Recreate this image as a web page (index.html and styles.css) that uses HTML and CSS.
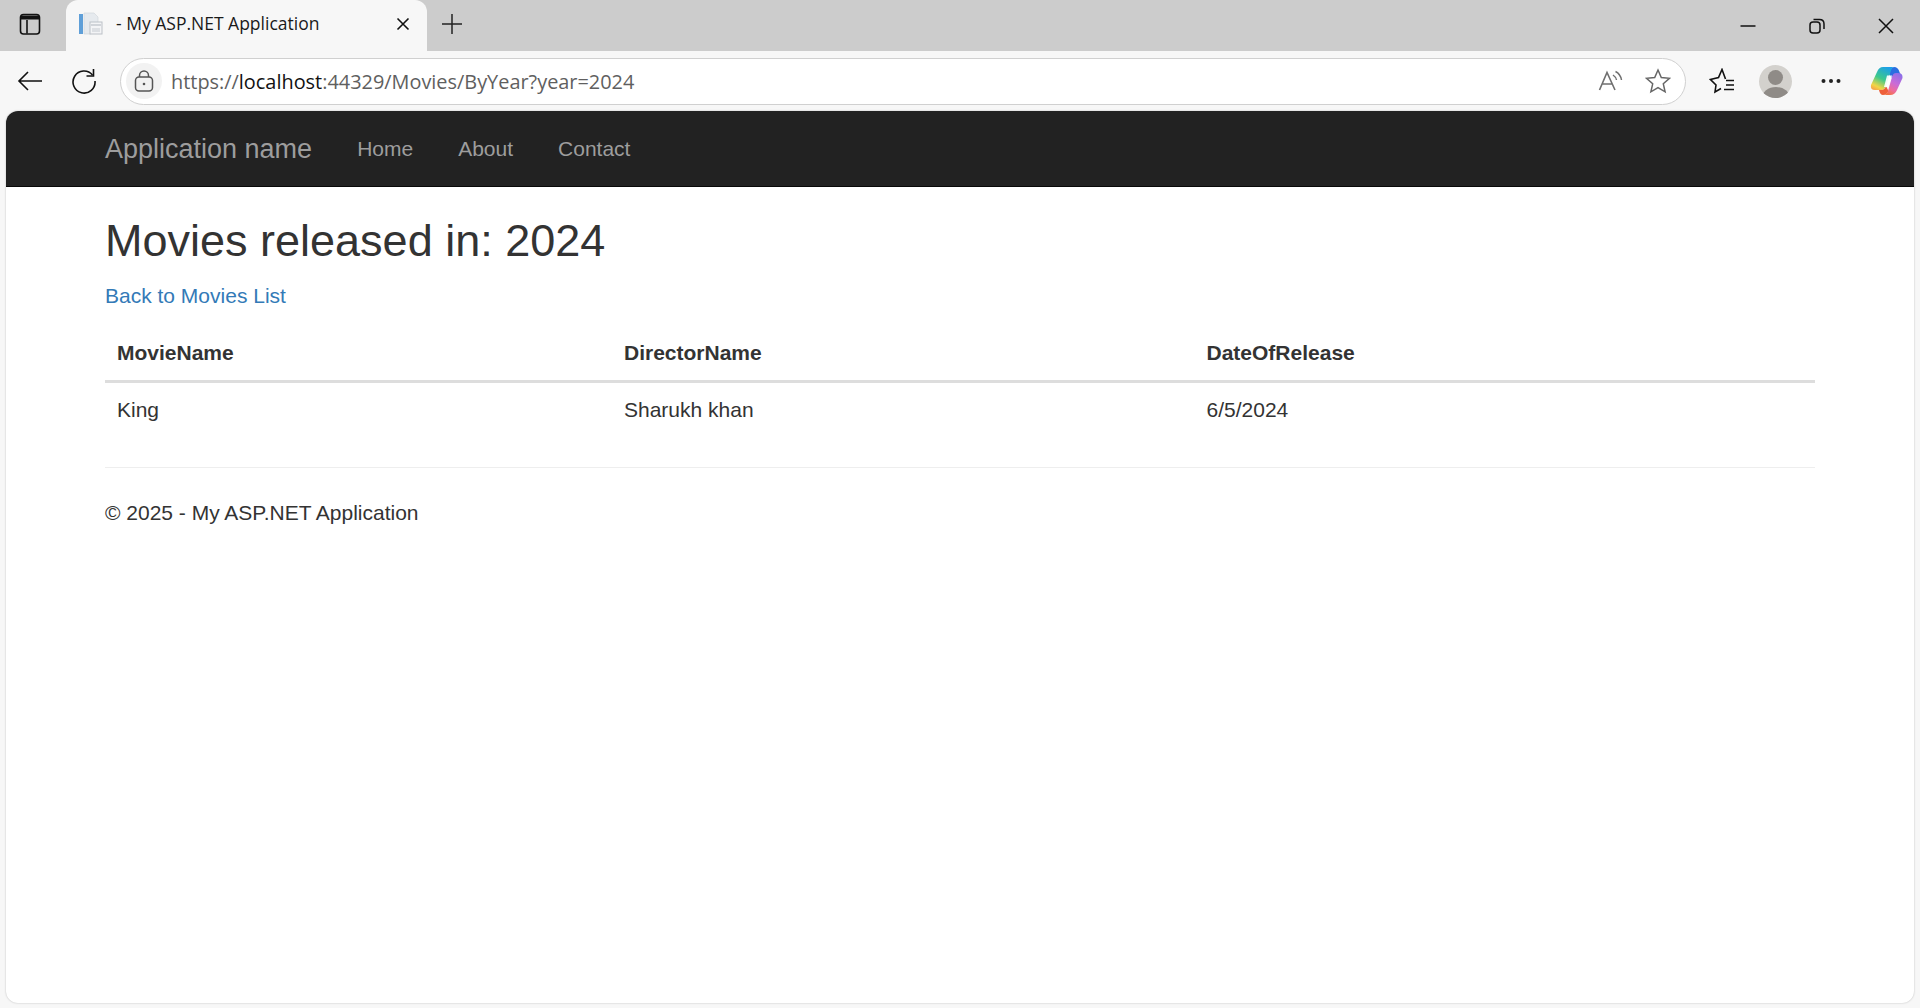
FILE: index.html
```html
<!DOCTYPE html>
<html lang="en">
<head>
    <meta charset="UTF-8">
    <meta name="viewport" content="width=device-width, initial-scale=1.0">
    <title>- My ASP.NET Application</title>
    <link rel="stylesheet" href="styles.css">
</head>
<body>
    <div class="browser">
        <div class="tabstrip">
            <div class="tab-actions">
                <svg class="icon" width="24" height="24" viewBox="0 0 24 24" fill="none" stroke="#111" stroke-width="1.6"><rect x="2.500" y="2.500" width="19" height="19.500" rx="3"/><path d="M9 8V21.500"/><path d="M3 5.500H21" stroke-width="4"/></svg>
            </div>
            <div class="tab">
                <svg class="favicon" width="26" height="26" viewBox="0 0 26 26"><rect x="2" y="3" width="4" height="20" fill="#5f9fd8"/><path d="M7 2H17L21 6V12H14V23H7Z" fill="#e6eaee" stroke="#cfd3d8" stroke-width=".6"/><rect x="13" y="11" width="12" height="12" fill="#f3f4f6" stroke="#bcc1c7"/><rect x="14" y="13" width="10" height="2" fill="#d0d4d9"/><rect x="15" y="17" width="8" height="4" fill="#dcdfe3"/></svg>
                <span class="tab-title">- My ASP.NET Application</span>
                <svg class="tab-close" width="14" height="14" viewBox="0 0 14 14" stroke="#111" stroke-width="1.6"><path d="M1.500 1.500L12.500 12.500M12.500 1.500L1.500 12.500"/></svg>
            </div>
            <svg class="new-tab" width="20" height="20" viewBox="0 0 20 20" stroke="#222" stroke-width="1.5"><path d="M10 0V20M0 10H20"/></svg>
            <div class="window-controls">
                <svg width="16" height="16" viewBox="0 0 16 16" stroke="#111" stroke-width="1.5"><path d="M0.500 8H15.500"/></svg>
                <svg width="16" height="16" viewBox="0 0 16 16" fill="none" stroke="#111" stroke-width="1.5"><rect x="1" y="4" width="10" height="11" rx="3"/><path d="M4.500 1.500H10.500Q15 1.500 15 6V11"/></svg>
                <svg width="16" height="16" viewBox="0 0 16 16" stroke="#111" stroke-width="1.5"><path d="M1 1L15 15M15 1L1 15"/></svg>
            </div>
        </div>
        <div class="toolbar">
            <svg class="tool-btn back" width="26" height="22" viewBox="0 0 26 22" fill="none" stroke="#111" stroke-width="1.6"><path d="M25 11H2M11 2L2 11L11 20"/></svg>
            <svg class="tool-btn reload" width="26" height="26" viewBox="0 0 26 26" fill="none" stroke="#111" stroke-width="1.6"><path d="M21.500 7A11 11 0 1 0 24 13"/><path d="M22.500 1V8H15.500"/></svg>
            <div class="address-bar">
                <span class="lock-pill">
                    <svg width="20" height="22" viewBox="0 0 20 22" fill="none" stroke="#555" stroke-width="1.500"><rect x="1.500" y="7" width="17" height="14" rx="3.500"/><path d="M5.500 7V5.500A4.500 4.500 0 0 1 14.500 5.500V7"/><circle cx="10" cy="14" r="1.300" fill="#555" stroke="none"/></svg>
                </span>
                <span class="url"><span class="url-dim">https://</span><span class="url-host">localhost</span><span class="url-dim">:44329/Movies/ByYear?year=2024</span></span>
                <svg class="read-aloud" width="26" height="24" viewBox="0 0 26 24" fill="none" stroke="#6f6f6f" stroke-width="1.600"><path d="M1.500 21L9 3.500L17 21M4.500 15H14"/><path d="M15 6Q18 8 18.500 11M17.500 2.500Q22.500 5 23.500 11" stroke-width="1.500"/></svg>
                <svg class="fav-star" width="26" height="26" viewBox="0 0 26 26" fill="none" stroke="#666" stroke-width="1.500"><path d="M13 2L16.300 9.500L24.500 10.300L18.300 15.800L20.100 23.800L13 19.600L5.900 23.800L7.700 15.800L1.500 10.300L9.700 9.500Z"/></svg>
            </div>
            <div class="tool-group">
                <svg width="26" height="26" viewBox="0 0 26 26" fill="none" stroke="#111" stroke-width="1.600"><path d="M16.500 11L13 1.500L9.500 9.500L1.500 11.500L7 17L6 24L12 20.500"/><path d="M17 12.500H25M17 17H25M15 21.500H25"/></svg>
                <div class="avatar"><span class="avatar-head"></span><span class="avatar-body"></span></div>
                <svg class="more" width="20" height="6" viewBox="0 0 20 6" fill="#222"><circle cx="2.500" cy="3" r="2"/><circle cx="10" cy="3" r="2"/><circle cx="17.500" cy="3" r="2"/></svg>
                <svg class="copilot" width="33" height="30" viewBox="0 0 33 30" fill="none">
                    <defs>
                        <linearGradient id="cp-left" x1="0.700" y1="0" x2="0.200" y2="1"><stop offset="0" stop-color="#1c9fe8"/><stop offset=".5" stop-color="#3cc98c"/><stop offset=".85" stop-color="#f2d545"/><stop offset="1" stop-color="#f6a84a"/></linearGradient>
                        <linearGradient id="cp-right" x1="0.800" y1="0" x2="0.300" y2="1"><stop offset="0" stop-color="#8a6fe8"/><stop offset=".45" stop-color="#c96bd8"/><stop offset=".75" stop-color="#ee6c9c"/><stop offset="1" stop-color="#f3703f"/></linearGradient>
                    </defs>
                    <path d="M24 1Q28 1 29.500 6L31 10H24Q22 10 21 12L19 8Q21 1 24 1Z" fill="#2a6de0"/>
                    <path d="M13 1H24Q22 1 20.500 6L16 20Q15 24 11 24H5Q0 24 1 19L7 6Q9 1 13 1Z" fill="url(#cp-left)"/>
                    <path d="M11 24Q15 24 16 20L18.500 25Q17 29 13 29Q10 29 9 24Z" fill="#ee5f3a"/>
                    <path d="M20 29H13Q17 29 18 25L22 11Q23 7 26 7H28Q33 7 32.500 12L27 24Q25 29 20 29Z" fill="url(#cp-right)"/>
                    <path d="M17 9.500H22L18.500 21H14Z" fill="#fff" fill-opacity=".92"/>
                </svg>
            </div>
        </div>
        <div class="viewport">
            <nav class="navbar">
                <a class="brand" href="#">Application name</a>
                <a class="nav-link" href="#">Home</a>
                <a class="nav-link" href="#">About</a>
                <a class="nav-link" href="#">Contact</a>
            </nav>
            <main class="body-content">
                <h2 class="page-title">Movies released in: 2024</h2>
                <p class="back-row"><a href="#">Back to Movies List</a></p>
                <table class="movies">
                    <colgroup>
                        <col class="col-movie">
                        <col class="col-director">
                        <col class="col-date">
                    </colgroup>
                    <thead>
                        <tr><th>MovieName</th><th>DirectorName</th><th>DateOfRelease</th></tr>
                    </thead>
                    <tbody>
                        <tr><td>King</td><td>Sharukh khan</td><td>6/5/2024</td></tr>
                    </tbody>
                </table>
                <hr class="rule">
                <footer class="site-footer">
                    <p>© 2025 - My ASP.NET Application</p>
                </footer>
            </main>
        </div>
    </div>
</body>
</html>
```

FILE: styles.css
```css
html, body {
    margin: 0;
    padding: 0;
    height: 100%;
    overflow: hidden;
}
body {
    font-family: "Liberation Sans", Arial, sans-serif;
    font-size: 21px;
    line-height: 30px;
    color: #333;
    background: #f7f7f7;
}
a {
    text-decoration: none;
}
.browser {
    height: 100%;
    display: flex;
    flex-direction: column;
}

/* tab strip */
.tabstrip {
    height: 51px;
    flex: none;
    display: flex;
    align-items: flex-end;
    background: #cccccc;
}
.tab-actions {
    width: 66px;
    height: 51px;
    box-sizing: border-box;
    padding: 0 6px 3px 0;
    display: flex;
    align-items: center;
    justify-content: center;
}
.tab {
    width: 361px;
    height: 51px;
    box-sizing: border-box;
    padding: 0 17px 3px 11px;
    display: flex;
    align-items: center;
    background: #f7f7f7;
    border-radius: 12px 12px 0 0;
}
.favicon {
    flex: none;
}
.tab-title {
    margin: 0 0 2px 13px;
    flex: 1;
    font-family: "Open Sans", "Liberation Sans", sans-serif;
    font-size: 17.5px;
    color: #1a1a1a;
    white-space: nowrap;
}
.new-tab {
    align-self: center;
    margin: 0 0 4px 15px;
}
.window-controls {
    margin-left: auto;
    height: 51px;
    padding-right: 26px;
    display: flex;
    align-items: center;
    gap: 53px;
}

/* toolbar */
.toolbar {
    height: 60px;
    flex: none;
    display: flex;
    align-items: center;
    padding-left: 17px;
    box-sizing: border-box;
}
.reload {
    margin-left: 28px;
}
.address-bar {
    margin-left: 23px;
    width: 1566px;
    height: 47px;
    box-sizing: border-box;
    flex: none;
    padding: 0 14px 0 5px;
    display: flex;
    align-items: center;
    background: #fff;
    border: 1.5px solid #d0d0d0;
    border-radius: 24px;
}
.lock-pill {
    width: 36px;
    height: 36px;
    border-radius: 18px;
    background: #f2f2f2;
    display: flex;
    align-items: center;
    justify-content: center;
    flex: none;
}
.url {
    margin-left: 9px;
    padding-top: 1px;
    flex: 1;
    font-family: "Open Sans", "Liberation Sans", sans-serif;
    font-size: 19.9px;
    white-space: nowrap;
}
.url-dim {
    color: #5f5f5f;
}
.url-host {
    color: #111;
}
.read-aloud {
    margin-right: 21px;
}
.tool-group {
    display: flex;
    align-items: center;
    margin-left: 23px;
}
.avatar {
    width: 33px;
    height: 33px;
    margin-left: 24px;
    border-radius: 50%;
    background: #d3d1cd;
    overflow: hidden;
    display: flex;
    flex-direction: column;
    align-items: center;
}
.avatar-head {
    width: 15px;
    height: 15px;
    margin-top: 5px;
    border-radius: 50%;
    background: #8f8b87;
    flex: none;
}
.avatar-body {
    width: 28px;
    height: 22px;
    margin-top: 2px;
    border-radius: 50%;
    background: #8f8b87;
    flex: none;
}
.more {
    margin-left: 29px;
}
.copilot {
    margin-left: 29px;
}

/* page */
.viewport {
    flex: 1;
    margin: 0 6px 5px;
    background: #fff;
    border-radius: 12px;
    overflow: hidden;
    box-shadow: 0 0 2px rgba(0, 0, 0, 0.25);
}
.navbar {
    height: 75px;
    padding-left: 99px;
    display: flex;
    align-items: center;
    background: #222;
    border-bottom: 1.5px solid #080808;
}
.navbar a {
    color: #9d9d9d;
}
.brand {
    font-size: 27px;
    margin-right: 45px;
}
.nav-link {
    margin-right: 45px;
}
.body-content {
    padding: 0 99px;
}
.page-title {
    margin: 29px 0 15px;
    font-size: 45px;
    font-weight: 500;
    line-height: 49.5px;
}
.back-row {
    margin: 0 0 15px;
}
.back-row a {
    color: #337ab7;
}
.movies {
    width: 100%;
    table-layout: fixed;
    border-collapse: collapse;
    margin-bottom: 30px;
}
.col-movie {
    width: 507px;
}
.col-director {
    width: 582.5px;
}
.movies th,
.movies td {
    padding: 12px;
    text-align: left;
}
.movies th {
    font-weight: 700;
    border-bottom: 3px solid #ddd;
}
.movies td {
    color: #333;
}
.rule {
    margin: 0 0 30px;
    border: 0;
    border-top: 1.5px solid #eee;
}
.site-footer p {
    margin: 0;
}
```
